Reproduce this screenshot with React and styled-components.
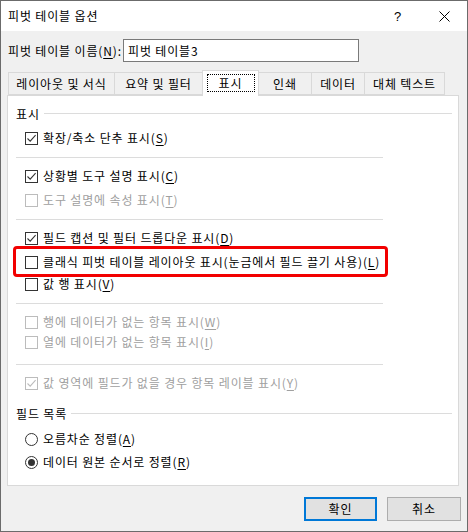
import React from "react";
import styled, { createGlobalStyle } from "styled-components";

const GlobalStyle = createGlobalStyle`
  html, body {
    margin: 0;
    padding: 0;
    background: #ffffff;
  }
  body {
    font-family: "Noto Sans CJK KR", "Noto Sans", sans-serif;
    font-size: 12px;
    letter-spacing: 0.85px;
    color: #000000;
  }
`;

const Window = styled.div`
  width: 468px;
  height: 532px;
  box-sizing: border-box;
  border: 1px solid #6b6b6b;
  background: #f0f0f0;
  display: flex;
  flex-direction: column;
`;

const TitleBar = styled.div`
  height: 30px;
  background: #ffffff;
  display: flex;
  align-items: center;
  padding-left: 7px;
`;

const TitleText = styled.div`
  flex: 1;
  line-height: 16px;
`;

const CaptionButton = styled.div`
  width: 46px;
  height: 30px;
  display: flex;
  align-items: center;
  justify-content: center;
  font-family: "Liberation Sans", sans-serif;
  font-size: 13px;
`;

const Body = styled.div`
  flex: 1;
  display: flex;
  flex-direction: column;
  padding: 8px 0 0 6px;
`;

const NameRow = styled.div`
  display: flex;
  align-items: center;
  height: 23px;
`;

const NameLabel = styled.div`
  width: 115px;
  padding-left: 1px;
  line-height: 16px;
  white-space: nowrap;
`;

const NameInput = styled.div`
  width: 236px;
  height: 23px;
  box-sizing: border-box;
  border: 1px solid #7a7a7a;
  background: #ffffff;
  padding-left: 4px;
  display: flex;
  align-items: center;
`;

const TabStrip = styled.div`
  margin-top: 8px;
  height: 25px;
  display: flex;
  align-items: flex-end;
  padding-left: 1px;
  position: relative;
  z-index: 1;
`;

const Tab = styled.div`
  width: ${(p) => p.w}px;
  height: ${(p) => (p.active ? 26 : 23)}px;
  margin-bottom: ${(p) => (p.active ? -1 : 0)}px;
  margin-left: ${(p) => (p.first ? 0 : -1)}px;
  box-sizing: border-box;
  border: 1px solid #d9d9d9;
  border-bottom: ${(p) => (p.active ? "none" : "1px solid #d9d9d9")};
  background: ${(p) => (p.active ? "#ffffff" : "#f0f0f0")};
  display: flex;
  align-items: center;
  justify-content: center;
  padding-bottom: ${(p) => (p.active ? 2 : 0)}px;
  position: relative;
  z-index: ${(p) => (p.active ? 2 : 1)};
  white-space: nowrap;
`;

const FocusLabel = styled.div`
  width: 48px;
  height: 18px;
  box-sizing: border-box;
  border: 1px dotted #000000;
  display: flex;
  align-items: center;
  justify-content: center;
`;

const Panel = styled.div`
  width: 452px;
  height: 391px;
  box-sizing: border-box;
  border: 1px solid #d9d9d9;
  background: #ffffff;
  padding: 7px 6px 0 8px;
  display: flex;
  flex-direction: column;
`;

const GroupHeader = styled.div`
  height: 20px;
  display: flex;
  align-items: center;
  margin-top: ${(p) => p.mt || 0}px;
`;

const GroupLine = styled.div`
  flex: 1;
  height: 1px;
  background: #dcdcdc;
  margin-left: 4px;
`;

const Separator = styled.div`
  width: 367px;
  height: 1px;
  background: #dcdcdc;
  margin-top: ${(p) => p.mt}px;
`;

const Row = styled.div`
  position: relative;
  height: 20px;
  display: flex;
  align-items: center;
  padding-left: 9px;
  margin-top: ${(p) => p.mt || 0}px;
  color: ${(p) => (p.disabled ? "#a0a0a0" : "#000000")};
  white-space: nowrap;
`;

const Box = styled.div`
  width: 13px;
  height: 13px;
  box-sizing: border-box;
  border: 1px solid ${(p) => (p.disabled ? "#bcbcbc" : "#333333")};
  background: #ffffff;
  margin-right: 5px;
  flex: none;
  display: flex;
  align-items: center;
  justify-content: center;
`;

const Radio = styled.div`
  width: 13px;
  height: 13px;
  box-sizing: border-box;
  border: 1px solid #333333;
  border-radius: 50%;
  background: #ffffff;
  margin-right: 5px;
  flex: none;
  display: flex;
  align-items: center;
  justify-content: center;
`;

const RadioDot = styled.div`
  width: 7px;
  height: 7px;
  border-radius: 50%;
  background: #333333;
`;

const Label = styled.span`
  line-height: 16px;
`;

const Key = styled.span`
  text-decoration: underline;
  text-underline-offset: 2px;
`;

const Highlight = styled.div`
  position: absolute;
  left: -3px;
  top: -6px;
  width: 375px;
  height: 31px;
  box-sizing: border-box;
  border: 3px solid #f20000;
  border-radius: 4px;
  pointer-events: none;
`;

const ButtonRow = styled.div`
  display: flex;
  justify-content: flex-end;
  gap: 10px;
  margin-top: 11px;
  padding-right: 6px;
`;

const Button = styled.div`
  width: ${(p) => (p.primary ? 73 : 74)}px;
  height: 24px;
  box-sizing: border-box;
  border: ${(p) => (p.primary ? "2px solid #0078d7" : "1px solid #adadad")};
  background: #e1e1e1;
  display: flex;
  align-items: center;
  justify-content: center;
  line-height: 16px;
`;

const Check = ({ disabled }) => (
  <svg width="11" height="11" viewBox="0 0 11 11">
    <path
      d="M1.5 5.5 L4.2 8.2 L9.6 2.2"
      fill="none"
      stroke={disabled ? "#bcbcbc" : "#333333"}
      strokeWidth="1.1"
    />
  </svg>
);

const CheckRow = ({ checked, disabled, mt, text, k, children }) => (
  <Row mt={mt} disabled={disabled}>
    <Box disabled={disabled}>{checked && <Check disabled={disabled} />}</Box>
    <Label>
      {text}(<Key>{k}</Key>)
    </Label>
    {children}
  </Row>
);

const tabs = [
  { label: "레이아웃 및 서식", w: 107 },
  { label: "요약 및 필터", w: 89 },
  { label: "표시", w: 57, active: true },
  { label: "인쇄", w: 54 },
  { label: "데이터", w: 54 },
  { label: "대체 텍스트", w: 81 },
];

export default function App() {
  return (
    <>
      <GlobalStyle />
      <Window>
        <TitleBar>
          <TitleText>피벗 테이블 옵션</TitleText>
          <CaptionButton>?</CaptionButton>
          <CaptionButton>
            <svg width="11" height="11" viewBox="0 0 11 11">
              <path d="M0.5 0.5 L10.5 10.5 M10.5 0.5 L0.5 10.5" stroke="#000" strokeWidth="1" />
            </svg>
          </CaptionButton>
        </TitleBar>
        <Body>
          <NameRow>
            <NameLabel>
              피벗 테이블 이름(<Key>N</Key>):
            </NameLabel>
            <NameInput>피벗 테이블3</NameInput>
          </NameRow>
          <TabStrip>
            {tabs.map((t, i) => (
              <Tab key={t.label} w={t.w} active={t.active} first={i === 0}>
                {t.active ? <FocusLabel>{t.label}</FocusLabel> : t.label}
              </Tab>
            ))}
          </TabStrip>
          <Panel>
            <GroupHeader>
              표시
              <GroupLine />
            </GroupHeader>
            <CheckRow mt={5} checked text="확장/축소 단추 표시" k="S" />
            <Separator mt={9} />
            <CheckRow mt={8} checked text="상황별 도구 설명 표시" k="C" />
            <CheckRow mt={4} disabled text="도구 설명에 속성 표시" k="T" />
            <Separator mt={9} />
            <CheckRow mt={8} checked text="필드 캡션 및 필터 드롭다운 표시" k="D" />
            <CheckRow mt={4} text="클래식 피벗 테이블 레이아웃 표시(눈금에서 필드 끌기 사용)" k="L">
              <Highlight />
            </CheckRow>
            <CheckRow mt={2} text="값 행 표시" k="V" />
            <Separator mt={9} />
            <CheckRow mt={8} disabled text="행에 데이터가 없는 항목 표시" k="W" />
            <CheckRow mt={0} disabled text="열에 데이터가 없는 항목 표시" k="I" />
            <Separator mt={12} />
            <CheckRow mt={8} checked disabled text="값 영역에 필드가 없을 경우 항목 레이블 표시" k="Y" />
            <GroupHeader mt={10}>
              필드 목록
              <GroupLine />
            </GroupHeader>
            <Row mt={6}>
              <Radio />
              <Label>
                오름차순 정렬(<Key>A</Key>)
              </Label>
            </Row>
            <Row mt={3}>
              <Radio>
                <RadioDot />
              </Radio>
              <Label>
                데이터 원본 순서로 정렬(<Key>R</Key>)
              </Label>
            </Row>
          </Panel>
          <ButtonRow>
            <Button primary>확인</Button>
            <Button>취소</Button>
          </ButtonRow>
        </Body>
      </Window>
    </>
  );
}
